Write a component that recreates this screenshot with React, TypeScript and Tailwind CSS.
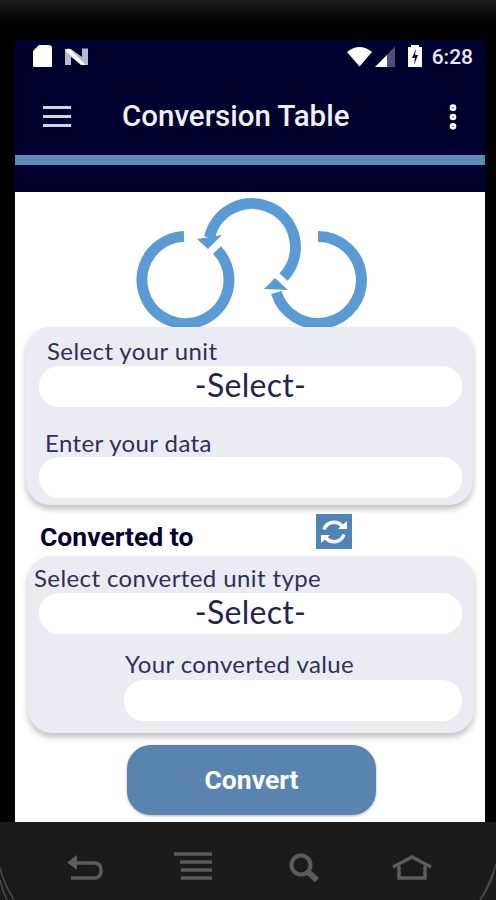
import { MoreVertical } from "lucide-react";

function StatusIcons() {
    return (
        <svg width="496" height="36" viewBox="0 0 496 36" className="absolute left-[-15px] top-0">
            {/* sim card */}
            <path d="M39 5h9q4 0 4 3v18q0 1-1 1H34q-1 0-1-1V11z" fill="#fff" />
            {/* N logo */}
            <path d="M65 25V9l6 0 11 8V8.500h6V25l-6 0-11-8V25z" fill="#b9b9cf" />
            <path d="M69 8.500l17 16.500h-5L65 10z" fill="#fff" />
            {/* wifi */}
            <path d="M347 12q12.500-10 25 0l-12.500 14.500z" fill="#fff" />
            {/* signal */}
            <path d="M395 6.500V27h-20z" fill="#4f4f78" />
            <path d="M387 15v12h-12z" fill="#fff" />
            {/* battery */}
            <path d="M408 7h3V5h8v2h3v20h-14z" fill="#fff" />
            <path d="M416 9l-4 9h3l-1 7 4-10h-3z" fill="#00002e" />
        </svg>
    );
}

function Logo() {
    return (
        <svg width="260" height="145" viewBox="120 190 260 145" className="block">
            <g fill="none" stroke="#5b9bd5" strokeWidth="11">
                <path d="M184 234.500A43.500 43.500 0 1 0 217 248" />
                <path d="M283.500 275A43.500 43.500 0 1 0 209.500 235.500" />
                <path d="M318 234.500A43.500 43.500 0 1 1 276.300 290.500" />
            </g>
            <path d="M197 237l11 10 14-14z" fill="#5b9bd5" />
            <path d="M264 287l11-11 13 12z" fill="#5b9bd5" />
        </svg>
    );
}

function Pill({ children, className }: { children?: string; className: string }) {
    return (
        <div className={`h-[41px] rounded-[20px] bg-white flex items-center justify-center pb-[4px] text-[32px] tracking-[0.3px] text-[#23234f] font-['Lato',sans-serif] ${className}`}>
            {children}
        </div>
    );
}

function Label({ children, className }: { children: string; className: string }) {
    return (
        <div className={`text-[24px] leading-[26px] tracking-[0.4px] text-[#2f2f58] font-['Lato',sans-serif] ${className}`}>
            {children}
        </div>
    );
}

export default function App() {
    return (
        <div className="relative w-[496px] h-[900px] flex flex-col bg-black overflow-hidden font-['Roboto',sans-serif]">
            <div className="h-10 bg-gradient-to-b from-[#1c1c1c] to-black" />

            <div className="ml-[15px] mr-[11px] h-[782px] flex flex-col bg-white">
                <div className="relative h-[152px] bg-[#00002e] shrink-0">
                    <StatusIcons />
                    <div className="absolute right-[12px] top-[4px] text-[21px] leading-[26px] font-medium text-[#e8e8ee]">6:28</div>
                    <div className="h-[115px] pt-[38px] flex items-center">
                        <div className="w-[28px] ml-[28px] flex flex-col gap-[6px]">
                            <div className="h-[3px] bg-[#d5d5e2]" />
                            <div className="h-[3px] bg-[#d5d5e2]" />
                            <div className="h-[3px] bg-[#d5d5e2]" />
                        </div>
                        <div className="ml-[51px] text-[29.5px] font-medium text-[#f0f0f5]">Conversion Table</div>
                        <MoreVertical size={32} strokeWidth={3} className="ml-auto mr-[16px] text-white" />
                    </div>
                    <div className="h-[10px] bg-[#5b8cb8]" />
                </div>

                <div className="flex justify-center h-[135px] shrink-0">
                    <Logo />
                </div>

                <div className="ml-[11px] mr-[12px] h-[178px] rounded-[24px] bg-[#e9ecf3] shadow-[0_4px_6px_rgba(0,0,0,0.25)] pl-[13px] pr-[11px] pt-[11px] shrink-0">
                    <Label className="ml-[8px]">Select your unit</Label>
                    <Pill className="mt-[2px]">-Select-</Pill>
                    <Label className="ml-[6px] mt-[23px]">Enter your data</Label>
                    <Pill className="mt-[1px]" />
                </div>

                <div className="h-[51px] flex items-end shrink-0 relative">
                    <div className="ml-[25px] mb-[4px] text-[26.500px] leading-[30px] font-bold text-[#00002e]">Converted to</div>
                    <div className="absolute left-[301px] top-[9px] w-[36px] h-[35px] bg-[#4f85b5] flex items-center justify-center">
                        <svg width="30" height="28" viewBox="0 0 30 28" fill="none" stroke="#fff" strokeWidth="3.500">
                            <path d="M5 11.500A10.500 10.500 0 0 1 23 8" />
                            <path d="M25 16.500A10.500 10.500 0 0 1 7 20" />
                            <path d="M19 11h9V3z" fill="#fff" stroke="none" />
                            <path d="M11 17H2v8z" fill="#fff" stroke="none" />
                        </svg>
                    </div>
                </div>

                <div className="ml-[13px] mr-[11px] h-[177px] rounded-[24px] bg-[#e9ecf3] shadow-[0_4px_6px_rgba(0,0,0,0.25)] pt-[9px] shrink-0">
                    <Label className="ml-[6px]">Select converted unit type</Label>
                    <Pill className="ml-[11px] mr-[12px] mt-[2px]">-Select-</Pill>
                    <Label className="ml-[97px] mt-[17px]">Your converted value</Label>
                    <Pill className="ml-[96px] mr-[12px] mt-[3px]" />
                </div>

                <div className="ml-[112px] mt-[12px] w-[249px] h-[70px] rounded-[24px] bg-[#5884af] shadow-[0_1px_3px_rgba(0,0,0,0.3)] flex items-center justify-center text-[26.5px] font-bold text-white shrink-0">
                    Convert
                </div>
            </div>

            <div className="flex-1 bg-[#1b1b1b] flex items-start pt-[30px]">
                <svg width="496" height="40" viewBox="0 0 496 40" fill="none" stroke="#5c5c5c" strokeWidth="3.500">
                    {/* back */}
                    <path d="M72 11h22q7 0 7 7.500t-7 7.500H71" />
                    <path d="M77 3v15l-10-7.500z" fill="#5c5c5c" stroke="none" />
                    {/* menu */}
                    <path d="M174 2h38M180 10h32M181 18h31M181 26h31" />
                    {/* search */}
                    <circle cx="301" cy="13" r="9.500" strokeWidth="4" />
                    <path d="M308 20l9 8" strokeWidth="6" />
                    {/* home */}
                    <path d="M393 15l19-10 19 10" />
                    <path d="M399 14v12h26V14" />
                </svg>
            </div>

            {/* bezel corners */}
            <svg width="496" height="40" viewBox="0 0 496 40" fill="none" stroke="#4a4a4a" strokeWidth="1.500" className="absolute left-0 bottom-0">
                <path d="M0 8q4 16 14 32M0 20q2 10 7 20" />
                <path d="M496 4q-6 20-16 36M494 12q-5 16-14 28" />
            </svg>
        </div>
    );
}
